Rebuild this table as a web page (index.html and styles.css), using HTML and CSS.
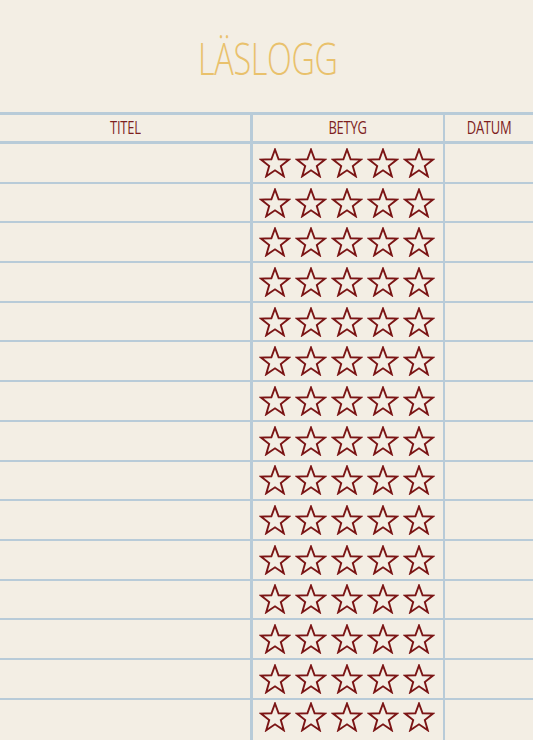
FILE: index.html
```html
<!DOCTYPE html>
<html lang="sv">
<head>
<meta charset="utf-8">
<link rel="stylesheet" href="styles.css">
<title>Läslogg</title>
</head>
<body>
<svg class="defs" width="0" height="0">
  <symbol id="star" viewBox="0 0 32 30">
    <polygon points="16,1.5 19.6,11.3 30,11.6 21.8,18 24.8,28.3 16,22.3 7.2,28.3 10.2,18 2,11.6 12.4,11.3" fill="none" stroke="#7b1515" stroke-width="1.9" stroke-linejoin="miter"/>
  </symbol>
</svg>
<header class="top"><h1 class="title">LÄSLOGG</h1></header>
<div class="log" id="log">
  <div class="cell head"><span>TITEL</span></div>
  <div class="cell head mid"><span>BETYG</span></div>
  <div class="cell head last"><span>DATUM</span></div>
</div>
<script>
const log = document.getElementById('log');
for (let i = 0; i < 15; i++) {
  const t = document.createElement('div'); t.className = 'cell';
  const b = document.createElement('div'); b.className = 'cell mid stars';
  let s = '';
  for (let k = 0; k < 5; k++) s += '<svg class="star"><use href="#star"/></svg>';
  b.innerHTML = s;
  const d = document.createElement('div'); d.className = 'cell last';
  log.append(t, b, d);
}
</script>
</body>
</html>
```
FILE: styles.css
```css
html, body { margin: 0; padding: 0; }
body {
  background: #f3eee4;
  width: 533px;
  height: 740px;
  overflow: hidden;
  font-family: "Open Sans", "Liberation Sans", sans-serif;
}
.defs { position: absolute; }
.top {
  height: 112px;
  display: flex;
  justify-content: center;
}
.title {
  margin: 33px 0 0 2px;
  font-weight: 300;
  font-size: 45px;
  line-height: 50px;
  color: #e9c16c;
  letter-spacing: -0.5px;
  transform: scaleX(0.72);
}
.log {
  display: grid;
  grid-template-columns: 250px 193px 90px;
  grid-template-rows: 29px repeat(14, 39.7px) 48px;
  border-top: 3px solid #b8cbd8;
}
.cell {
  border-bottom: 2px solid #b8cbd8;
  box-sizing: border-box;
}
.stars:last-child, .cell:nth-last-child(-n+3) { align-items: flex-start; }
.cell:nth-last-child(-n+3).stars { padding-top: 2px; }
.mid { border-left: 3px solid #b8cbd8; }
.last { border-left: 2px solid #b8cbd8; }
.head {
  border-bottom-width: 3px;
  display: flex;
  align-items: center;
  justify-content: center;
  color: #7e1e1e;
  font-size: 18px;
  line-height: 20px;
  letter-spacing: -0.3px;
  padding-bottom: 2px;
}
.head span { display: inline-block; transform: scaleX(0.72); }
.stars {
  display: flex;
  align-items: center;
  padding-left: 6px;
  gap: 4px;
}
.star { width: 32px; height: 30px; }
```
